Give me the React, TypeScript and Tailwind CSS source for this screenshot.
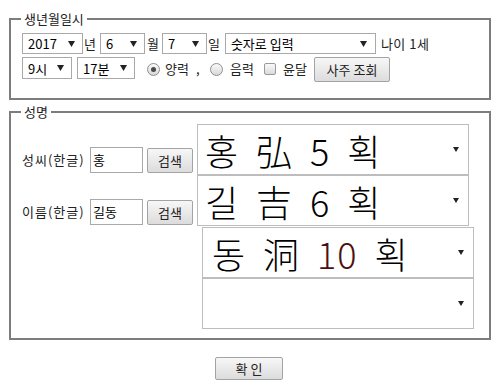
import React from "react";

const FONT = { fontFamily: '"Noto Sans CJK KR", "Noto Sans", sans-serif' };

function Arrow({ w = 7, h = 6 }: { w?: number; h?: number }) {
  return (
    <svg width={w} height={h} viewBox={`0 0 ${w} ${h}`} className="shrink-0">
      <polygon points={`0,0 ${w},0 ${w / 2},${h}`} fill="#222" />
    </svg>
  );
}

function SmallSelect({ value, width, height = 21 }: { value: string; width: string; height?: string | number }) {
  return (
    <div
      className={`${width} flex items-center justify-between border border-[#a9a9a9] bg-white pl-[5px] pr-[7px] text-[13px] leading-none text-black`}
      style={{ height }}
    >
      <span>{value}</span>
      <Arrow />
    </div>
  );
}

function Radio({ checked }: { checked?: boolean }) {
  return (
    <span className="flex h-[13px] w-[13px] shrink-0 items-center justify-center rounded-full border border-[#8f8f8f] bg-gradient-to-b from-[#fafafa] to-[#d8d8d8]">
      {checked && <span className="h-[5px] w-[5px] rounded-full bg-[#4a4a4a]" />}
    </span>
  );
}

function BigSelect({ children, ml, pl }: { children: React.ReactNode; ml?: string; pl: string }) {
  return (
    <div className={`flex h-[51px] w-[272px] shrink-0 items-center justify-between border border-[#bdbdbd] bg-white ${pl} pr-[9px] ${ml ?? ""}`}>
      <span className="whitespace-pre text-[36px] font-light leading-none tracking-[1px] text-black [word-spacing:8px]">{children}</span>
      <Arrow w={6} h={5} />
    </div>
  );
}

function GreyButton({ label, className }: { label: string; className: string }) {
  return (
    <button className={`flex items-center justify-center rounded-[2px] border border-[#a3a3a3] bg-gradient-to-b from-[#f7f7f7] to-[#dcdcdc] text-[13px] leading-none text-[#222] ${className}`}>
      {label}
    </button>
  );
}

export default function App() {
  return (
    <div className="h-[391px] w-[500px] overflow-hidden bg-white text-[13px] text-[#222]" style={FONT}>
      {/* 생년월일시 */}
      <fieldset className="mx-[9px] mt-[10px] border-2 border-[#7d7d7d] pb-[16px] pl-[11px] pr-2 pt-[5px]">
        <legend className="-ml-[1px] px-[3px] text-[13px] leading-[18px]">생년월일시</legend>

        <div className="flex items-center">
          <SmallSelect value="2017" width="w-[61px]" />
          <span className="ml-[1px] mr-[4px]">년</span>
          <SmallSelect value="6" width="w-[45px]" />
          <span className="ml-[2px] mr-[3px]">월</span>
          <SmallSelect value="7" width="w-[45px]" />
          <span className="ml-[1px] mr-[5px]">일</span>
          <div className="flex h-[21px] w-[151px] items-center justify-between border border-[#a9a9a9] bg-white pl-[5px] pr-[8px] text-[13px] leading-none text-black">
            <span>숫자로 입력</span>
            <Arrow />
          </div>
          <span className="ml-[5px] tracking-[0.5px]">나이 1세</span>
        </div>

        <div className="mt-[3px] flex items-start">
          <SmallSelect value="9시" width="w-[50px]" height={22} />
          <div className="ml-[5px]">
            <SmallSelect value="17분" width="w-[58px]" height={22} />
          </div>
          <div className="flex h-[24px] items-center">
            <span className="ml-[12px]">
              <Radio checked />
            </span>
            <span className="ml-[5px] w-[28px]">양력</span>
            <span className="ml-[3px] w-[14px]">,</span>
            <Radio />
            <span className="ml-[7px] w-[28px]">음력</span>
            <span className="ml-[6px] h-[12px] w-[12px] rounded-[2px] border border-[#9a9a9a] bg-gradient-to-b from-[#fafafa] to-[#dadada]" />
            <span className="ml-[7px] w-[28px]">윤달</span>
          </div>
          <GreyButton label="사주 조회" className="ml-[3px] h-[25px] w-[76px]" />
        </div>
      </fieldset>

      {/* 성명 */}
      <fieldset className="mx-[9px] mt-[3px] border-2 border-[#7d7d7d] pb-[9px] pl-[11px] pr-2 pt-[3px]">
        <legend className="-ml-[1px] px-[3px] text-[13px] leading-[18px]">성명</legend>

        <div className="flex items-end">
          <div className="mb-[2px] flex h-[26px] items-center">
            <span className="w-[68px] whitespace-nowrap tracking-[1px]">성씨(한글)</span>
            <div className="flex h-[26px] w-[53px] items-center border border-[#a9a9a9] bg-white pl-[2px] text-black">홍</div>
            <GreyButton label="검색" className="ml-[4px] mt-[1px] h-[25px] w-[46px]" />
          </div>
          <BigSelect ml="ml-[4px]" pl="pl-[7px]">
            홍 弘 5 획
          </BigSelect>
        </div>

        <div className="flex items-end">
          <div className="mb-[1px] flex h-[26px] items-center">
            <span className="w-[68px] whitespace-nowrap tracking-[1px]">이름(한글)</span>
            <div className="flex h-[26px] w-[53px] items-center border border-[#a9a9a9] bg-white pl-[2px] text-black">길동</div>
            <GreyButton label="검색" className="ml-[4px] mt-[1px] h-[25px] w-[46px]" />
          </div>
          <BigSelect ml="ml-[4px]" pl="pl-[7px]">
            길 吉 6 획
          </BigSelect>
        </div>

        <div className="mt-[1px] flex">
          <BigSelect ml="ml-[180px]" pl="pl-[9px]">
            동 洞 <span className="text-[#4b0f0f]">10</span> 획
          </BigSelect>
        </div>
        <div className="flex">
          <BigSelect ml="ml-[180px]" pl="pl-[9px]">
            {""}
          </BigSelect>
        </div>
      </fieldset>

      <div className="mt-[17px] flex justify-center">
        <GreyButton label="확 인" className="-ml-[2px] h-[23px] w-[68px]" />
      </div>
    </div>
  );
}
